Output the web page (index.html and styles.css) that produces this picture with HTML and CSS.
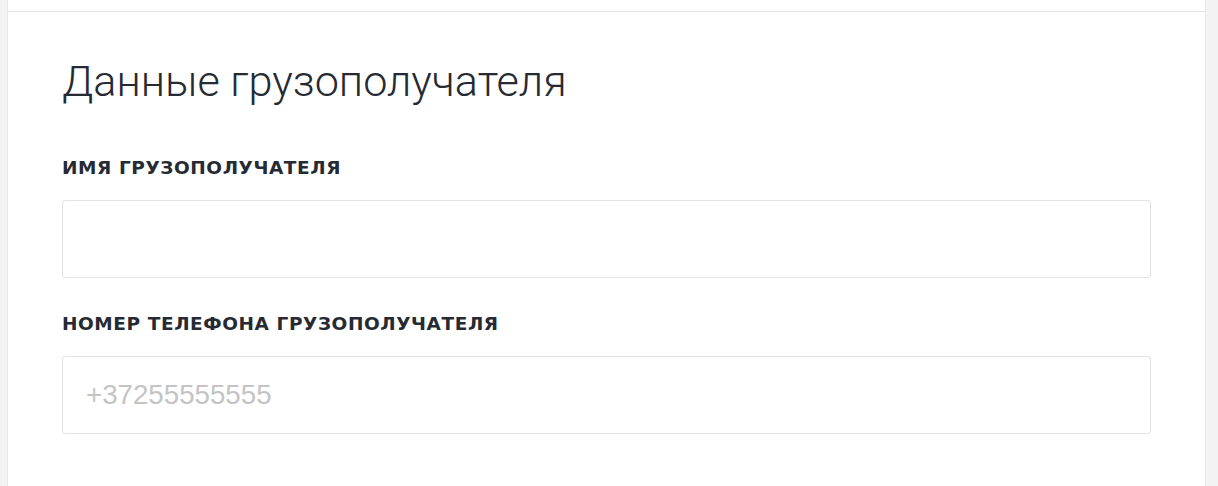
FILE: index.html
```html
<!DOCTYPE html>
<html lang="ru">
<head>
  <meta charset="UTF-8" />
  <meta name="viewport" content="width=device-width, initial-scale=1.0"/>
  <title>Данные грузополучателя</title>
  <link rel="stylesheet" href="styles.css">
</head>
<body>
  <div class="pagina">
    <div class="cartao cartao-topo"></div>
    <div class="cartao">
      <h2>Данные грузополучателя</h2>
      <div class="campo">
        <label for="nome">Имя грузополучателя</label>
        <input id="nome" type="text" />
      </div>
      <div class="campo">
        <label for="telefone">Номер телефона грузополучателя</label>
        <input id="telefone" type="tel" placeholder="+37255555555" />
      </div>
    </div>
  </div>
</body>
</html>
```

FILE: styles.css
```css
body {
  font-family: "Liberation Sans", Arial, sans-serif;
  background-color: #f3f3f3;
  margin: 0;
  padding: 0;
}

.pagina {
  margin: 0 12px 0 7px;
  background-color: #fff;
  border-left: 1px solid #e8e8e8;
  border-right: 1px solid #e8e8e8;
  min-height: 486px;
}

.cartao-topo {
  height: 11px;
  border-bottom: 1px solid #e4e4e4;
}

.cartao {
  padding: 0 54px;
}

h2 {
  font-family: Roboto, sans-serif;
  font-weight: 300;
  font-size: 43.2px;
  color: #262a33;
  margin: 0;
  padding-top: 45px;
  line-height: 50px;
}

.campo {
  margin-top: 51px;
}

.campo + .campo {
  margin-top: 36px;
}

.campo label {
  display: block;
  font-family: "DejaVu Sans", sans-serif;
  font-weight: 700;
  font-size: 18.5px;
  letter-spacing: 0.58px;
  color: #262a33;
  text-transform: uppercase;
  margin-bottom: 22px;
  line-height: 20px;
}

.campo input {
  display: block;
  box-sizing: border-box;
  width: 100%;
  height: 78px;
  padding: 0 23px;
  border: 1px solid #e3e3e3;
  border-radius: 3px;
  font-family: "Liberation Sans", Arial, sans-serif;
  font-size: 27.7px;
  color: #262a33;
  outline: none;
}

.campo input::placeholder {
  color: #c4c4c4;
}
```
